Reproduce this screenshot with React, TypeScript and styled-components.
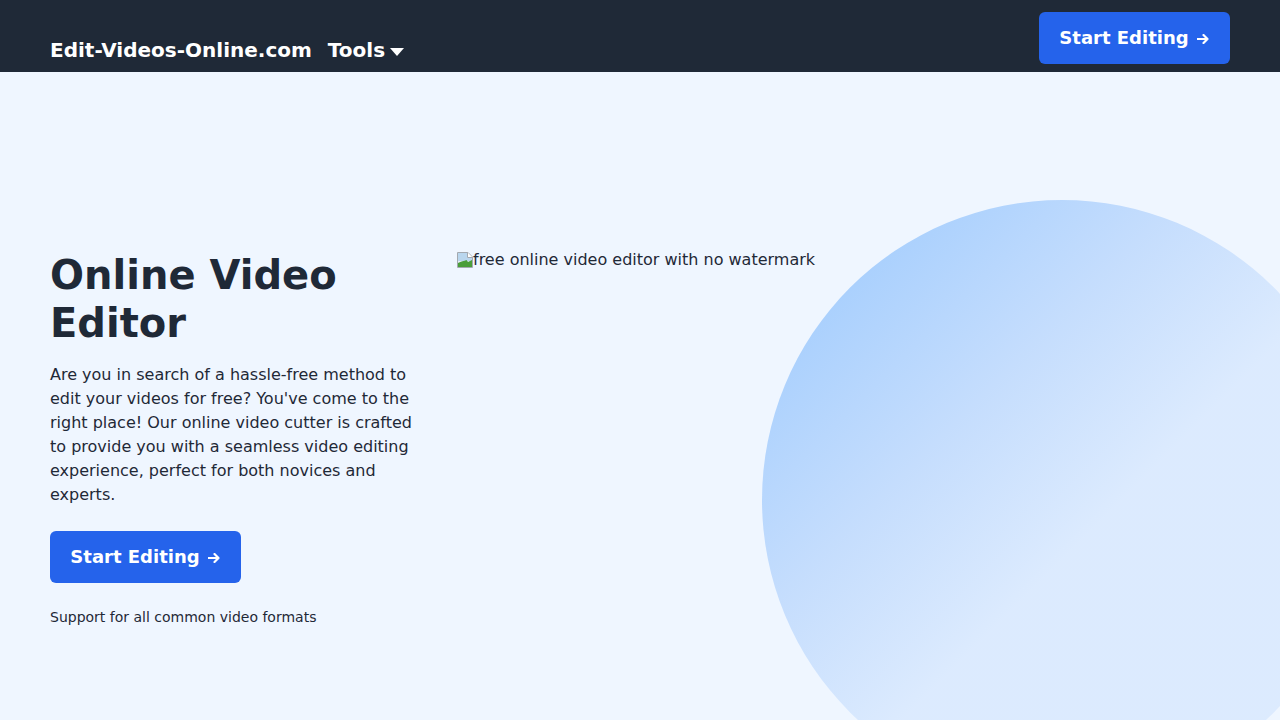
import React from 'react';
import styled, { createGlobalStyle } from 'styled-components';

const GlobalStyle = createGlobalStyle`
html, body {
  margin: 0;
  padding: 0;
  background: #eff6ff;
  font-family: "DejaVu Sans", Verdana, sans-serif;
  color: #1f2937;
}
* {
  box-sizing: border-box;
}
`;

const ArrowIcon: React.FC = () => (
  <Arrow viewBox="0 0 12 10">
    <path d="M0.5 5 H10.5 M6.5 1 L10.5 5 L6.5 9" fill="none" stroke="#ffffff" strokeWidth="2.2" strokeLinecap="round" strokeLinejoin="round" />
  </Arrow>
);

const App: React.FC = () => {
  return (
    <>
      <GlobalStyle />
      <Page>
        <Header>
          <NavLeft>
            <Logo href="#">Edit-Videos-Online.com</Logo>
            <ToolsMenu>
              Tools
              <Caret viewBox="0 0 14 8">
                <path d="M0 0 L14 0 L7 8 Z" fill="#ffffff" />
              </Caret>
            </ToolsMenu>
          </NavLeft>
          <StartButton>
            Start Editing
            <ArrowIcon />
          </StartButton>
        </Header>
        <Hero>
          <Blob />
          <HeroGrid>
            <TextColumn>
              <Title>Online Video Editor</Title>
              <Lead>
                Are you in search of a hassle-free method to edit your videos for free? You've come to the
                right place! Our online video cutter is crafted to provide you with a seamless video editing
                experience, perfect for both novices and experts.
              </Lead>
              <StartButton>
                Start Editing
                <ArrowIcon />
              </StartButton>
              <Note>Support for all common video formats</Note>
            </TextColumn>
            <ImageColumn>
              <BrokenImage>
                {/* broken image placeholder */}
                <svg width="16" height="16" viewBox="0 0 16 16">
                  <path d="M0.5 0.5 H11 L15.5 5 V15.5 H0.5 Z" fill="#e8eef4" stroke="#a3a9b0" strokeWidth="1" />
                  <path d="M1 1 H10.5 V5.5 H15 V9 L1 9 Z" fill="#b9d6ee" />
                  <path d="M1 15 L1 11 C4 9.5 7 9 9.5 8 L11 10 L15 8 V15 Z" fill="#4a9e3a" />
                  <path d="M10.5 0.5 V5.5 H15.5" fill="#ffffff" stroke="#a3a9b0" strokeWidth="1" />
                </svg>
                <span>free online video editor with no watermark</span>
              </BrokenImage>
            </ImageColumn>
          </HeroGrid>
        </Hero>
      </Page>
    </>
  );
};

const Page = styled.div`
min-height: 720px;
overflow: hidden;
`;

const Header = styled.header`
height: 72px;
background-color: #1f2937;
display: flex;
justify-content: space-between;
align-items: flex-end;
padding: 12px 50px 8px 50px;
`;

const NavLeft = styled.nav`
display: flex;
align-items: center;
gap: 16px;
`;

const Logo = styled.a`
color: #ffffff;
text-decoration: none;
font-weight: 700;
font-size: 20px;
line-height: 28px;
`;

const ToolsMenu = styled.div`
color: #ffffff;
font-weight: 700;
font-size: 20px;
line-height: 28px;
display: flex;
align-items: center;
gap: 5px;
`;

const Caret = styled.svg`
width: 14px;
height: 8px;
margin-top: 3px;
`;

const StartButton = styled.button`
align-self: flex-start;
display: inline-flex;
align-items: center;
justify-content: center;
height: 52px;
width: 191px;
background-color: #2563eb;
color: #ffffff;
border: none;
border-radius: 6px;
padding: 12px 1px 12px 0;
font-family: "DejaVu Sans", Verdana, sans-serif;
font-weight: 700;
font-size: 18px;
line-height: 28px;
white-space: nowrap;
cursor: pointer;
`;

const Arrow = styled.svg`
width: 12px;
height: 10px;
margin-left: 8px;
margin-top: 1px;
`;

const Hero = styled.main`
position: relative;
min-height: 648px;
padding: 179px 50px 40px 50px;
`;

const Blob = styled.div`
position: absolute;
left: 762px;
top: 128px;
width: 600px;
height: 600px;
border-radius: 50%;
background: linear-gradient(to bottom right, #93c5fd 0%, #c3dcfd 35%, #dbeafe 55%, #dbeafe 100%);
opacity: 0.95;
z-index: 0;
`;

const HeroGrid = styled.div`
position: relative;
z-index: 1;
display: grid;
grid-template-columns: 375px 1fr;
gap: 32px;
align-items: start;
`;

const TextColumn = styled.div`
display: flex;
flex-direction: column;
`;

const Title = styled.h1`
margin: 0 0 16px 0;
font-size: 40px;
line-height: 48px;
font-weight: 700;
color: #1f2937;
`;

const Lead = styled.p`
margin: 0 0 24px 0;
font-size: 16px;
line-height: 24px;
color: #1f2937;
`;

const Note = styled.p`
margin: 24px 0 0 0;
font-size: 14px;
line-height: 20px;
color: #1f2937;
`;

const ImageColumn = styled.div`
padding-top: 0;
`;

const BrokenImage = styled.div`
display: flex;
align-items: center;
font-size: 16px;
line-height: 24px;
color: #1f2937;
margin-top: -3px;
svg {
  flex-shrink: 0;
}
`;

export default App;
